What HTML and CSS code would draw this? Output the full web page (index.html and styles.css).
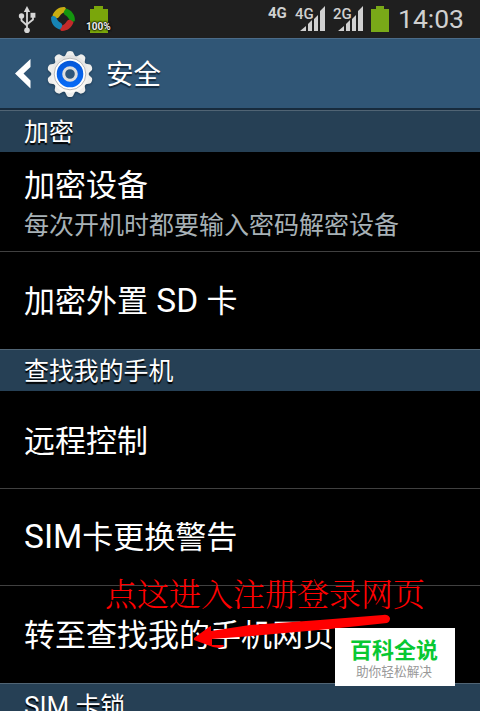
FILE: index.html
```html
<!DOCTYPE html>
<html lang="zh-CN">
<head>
<meta charset="utf-8">
<title>安全</title>
<link rel="stylesheet" href="styles.css">
</head>
<body>
<main class="screen">
  <div class="status">
    <svg class="usb" width="18" height="28" viewBox="0 0 18 28" fill="none" stroke="#d6d6d6" stroke-width="1.800">
      <path d="M9 4v20M3.500 10v4.500l5.500 5M15 9v4.500l-5.500 4.500"/>
      <path d="M9 0l3.200 6H5.800z" fill="#d6d6d6" stroke="none"/>
      <circle cx="9" cy="24.300" r="2.800" fill="#d6d6d6" stroke="none"/>
      <circle cx="3.500" cy="10" r="2.700" fill="#d6d6d6" stroke="none"/>
      <path d="M12.500 6.800h4.900v4.900h-4.900z" fill="#d6d6d6" stroke="none"/>
    </svg>
    <svg class="swirl" width="26" height="26" viewBox="0 0 26 26">
      <g id="blades">
        <path fill="#c9ad12" d="M2.500 9.500C4.500 4 9.500.700 14.500 1.100c2.300 1 1.500 4.200-.5 5.400-2.500 1.200-3.500 2-5 4.500-1.700 2.200-4.600 1.200-6.500-1.500z"/>
        <path fill="#14960f" d="M16.500 2.500C22 4.500 25.300 9.500 24.900 14.500c-1 2.300-4.200 1.500-5.400-.5-1.200-2.500-2-3.500-4.500-5-2.200-1.700-1.200-4.600 1.500-6.500z"/>
        <path fill="#c32b2b" d="M23.500 16.500C21.500 22 16.500 25.300 11.500 24.900c-2.300-1-1.500-4.200.5-5.400 2.500-1.200 3.500-2 5-4.500 1.700-2.200 4.600-1.200 6.500 1.500z"/>
        <path fill="#1784b5" d="M9.500 23.500C4 21.500.700 16.500 1.100 11.500c1-2.300 4.200-1.500 5.400.5 1.200 2.500 2 3.500 4.500 5 2.200 1.700 1.200 4.600-1.500 6.500z"/>
      </g>
    </svg>
    <div class="charge">
      <svg width="20" height="28" viewBox="0 0 20 28"><path fill="#7aa60b" d="M1 3h4V0h9v3h5v24H1z"/></svg>
      <span class="percent">100%</span>
    </div>
    <span class="net">4G</span>
    <div class="signal">
      <span class="net">4G</span>
      <svg width="26" height="25" viewBox="0 0 26 25" fill="#d0d0d0"><path d="M0 25l6-5v5zM8 25v-7l4-4v11zM14 25V13l4-4v16zM20 25V5l5-5v25z"/></svg>
    </div>
    <div class="signal second">
      <span class="net">2G</span>
      <svg width="26" height="25" viewBox="0 0 26 25" fill="#d0d0d0"><path d="M0 25l6-5v5zM8 25v-7l4-4v11zM14 25V13l4-4v16zM20 25V5l5-5v25z"/></svg>
    </div>
    <svg class="battery" width="18" height="26" viewBox="0 0 18 26"><path fill="#79a918" d="M0 3h5V0h8v3h5v23H0z"/></svg>
    <time class="clock">14:03</time>
  </div>
  <header class="bar">
    <svg class="back" width="18" height="30" viewBox="0 0 18 30"><path fill="#fff" d="M15.500 0v8L8.500 14.500 15.500 21.500v8L0 14.500z"/></svg>
    <svg class="gear" width="48" height="48" viewBox="-24 -24 48 48">
      <defs>
        <linearGradient id="metal" x1="0" y1="0" x2="0" y2="1"><stop offset="0" stop-color="#e0e0e0"/><stop offset="1" stop-color="#fffdf8"/></linearGradient>
        <linearGradient id="blue" x1="0" y1="0" x2="0" y2="1"><stop offset="0" stop-color="#0657d8"/><stop offset="1" stop-color="#076cf8"/></linearGradient>
        <path id="tooth" d="M-5.500-17l2.600-5.200Q0-24 2.900-22.200L5.500-17z"/>
      </defs>
      <g fill="#eeeeec">
        <use href="#tooth"/><use href="#tooth" transform="rotate(36)"/><use href="#tooth" transform="rotate(72)"/><use href="#tooth" transform="rotate(108)"/><use href="#tooth" transform="rotate(144)"/><use href="#tooth" transform="rotate(180)"/><use href="#tooth" transform="rotate(216)"/><use href="#tooth" transform="rotate(252)"/><use href="#tooth" transform="rotate(288)"/><use href="#tooth" transform="rotate(324)"/>
      </g>
      <circle r="18.800" fill="url(#metal)"/>
      <circle r="15.800" fill="#fff" stroke="#b8b8b8" stroke-width="1"/>
      <circle r="13.300" fill="url(#blue)"/>
      <circle r="6.300" fill="#2f567a" stroke="#dedede" stroke-width="3"/>
    </svg>
    <h1 class="title">安全</h1>
  </header>
  <h2 class="section">加密</h2>
  <div class="row detail"><span class="label">加密设备</span><span class="summary">每次开机时都要输入密码解密设备</span></div>
  <div class="row"><span class="label">加密外置<span class="latin"> SD </span>卡</span></div>
  <h2 class="section">查找我的手机</h2>
  <div class="row"><span class="label">远程控制</span></div>
  <div class="row"><span class="label"><span class="latin">SIM</span>卡更换警告</span></div>
  <div class="row last"><span class="label">转至查找我的手机网页</span></div>
  <h2 class="section"><span class="latin">SIM </span>卡锁</h2>
  <div class="note">点这进入注册登录网页</div>
  <svg class="arrow" width="202" height="36" viewBox="0 0 202 36"><path fill="#f00" d="M4 24L19 13l2-1v5L60 11 130 6 193 1q5-1 7 3 0 4-3 5L140 15 62 22 22 25v6l12 0-1 2-4 1-6-1L4 26z" /></svg>
  <aside class="brand"><strong class="brand-name">百科全说</strong><span class="brand-tag">助你轻松解决</span></aside>
</main>
</body>
</html>
```
FILE: styles.css
```css
* { box-sizing: border-box; }
body { margin: 0; background: #000; }
.screen {
  position: relative;
  width: 480px;
  height: 711px;
  overflow: hidden;
  background: #000;
  color: #fff;
  font-family: Roboto, "Noto Sans CJK SC", sans-serif;
}
.status {
  display: flex;
  align-items: flex-start;
  height: 38px;
  background: #1f1f1f;
  color: #d0d0d0;
}
.usb { margin: 6px 0 0 18px; }
.swirl { margin: 6px 0 0 14px; }
.charge { position: relative; margin: 6px 0 0 13px; height: 28px; width: 20px; }
.percent {
  position: absolute;
  left: -3px;
  top: 15px;
  font: bold 10px/12px Roboto, sans-serif;
  color: #eee;
  text-shadow: 0 0 2px #000, 0 0 2px #000, 0 0 2px #000;
}
.net { font-size: 15px; line-height: 14px; font-weight: 700; }
.status > .net { margin: 6px 0 0 159px; width: 19px; }
.signal { position: relative; width: 31px; height: 25px; margin: 6px 0 0 8px; }
.signal svg { position: absolute; left: 5px; top: 0; }
.signal .net { position: absolute; left: 0; top: 1px; z-index: 1; font-weight: 500; text-shadow: 1px 0 #1f1f1f, 0 1px #1f1f1f, 1px 1px #1f1f1f; }
.signal.second { margin-left: 7px; }
.battery { margin: 6px 0 0 7px; }
.clock { margin: 3px 0 0 9px; font-size: 26.500px; line-height: 32px; }
.bar {
  display: flex;
  align-items: center;
  height: 72px;
  background: #305676;
  border-top: 1px solid #4b6b88;
  border-bottom: 2px solid #172b3d;
}
.back { margin-left: 15px; }
.gear { margin-left: 13px; filter: drop-shadow(0 1px 1px #1c3952); }
.title { margin: 2px 0 0 12px; font-size: 27.500px; line-height: 40px; font-weight: 400; text-shadow: 0 2px 1px #172b3d; }
.section {
  height: 42px;
  margin: 0;
  padding: 2px 24px 0;
  border-top: 1px solid #506474;
  background: #264055;
  font-size: 24.900px;
  line-height: 40px;
  font-weight: 400;
  text-shadow: 0 2px 1px #000;
}
.section .latin { font-size: 26px; }
.row {
  display: flex;
  flex-direction: column;
  justify-content: center;
  height: 97px;
  padding: 4px 24px 0;
}
.row + .row { height: 98px; padding-top: 2px; border-top: 1px solid #404040; }
.row.detail { height: 99px; padding-top: 4px; }
.row + .row.last { height: 98px; }
.row:not(.detail) + .row:not(.last) { height: 97px; }
.label { font-size: 31px; line-height: 44px; white-space: nowrap; }
.label .latin { font-size: 33.500px; line-height: 40px; }
.summary { font-size: 25px; line-height: 36px; color: #a7b1b6; white-space: nowrap; }
.note {
  position: absolute;
  left: 105px;
  top: 570px;
  font: 300 32px/44px "Noto Serif CJK SC", "Noto Sans CJK SC", sans-serif;
  color: #f00;
  white-space: nowrap;
}
.arrow { position: absolute; left: 190px; top: 614px; }
.brand {
  position: absolute;
  left: 335px;
  top: 628px;
  display: flex;
  flex-direction: column;
  align-items: center;
  width: 120px;
  height: 58px;
  padding: 9px 2px 0 0;
  background: #fff;
}
.brand-name { font-size: 22px; line-height: 28px; font-weight: 700; color: #08c832; }
.brand-tag { font-size: 12.700px; line-height: 14px; color: #999; white-space: nowrap; }
```
